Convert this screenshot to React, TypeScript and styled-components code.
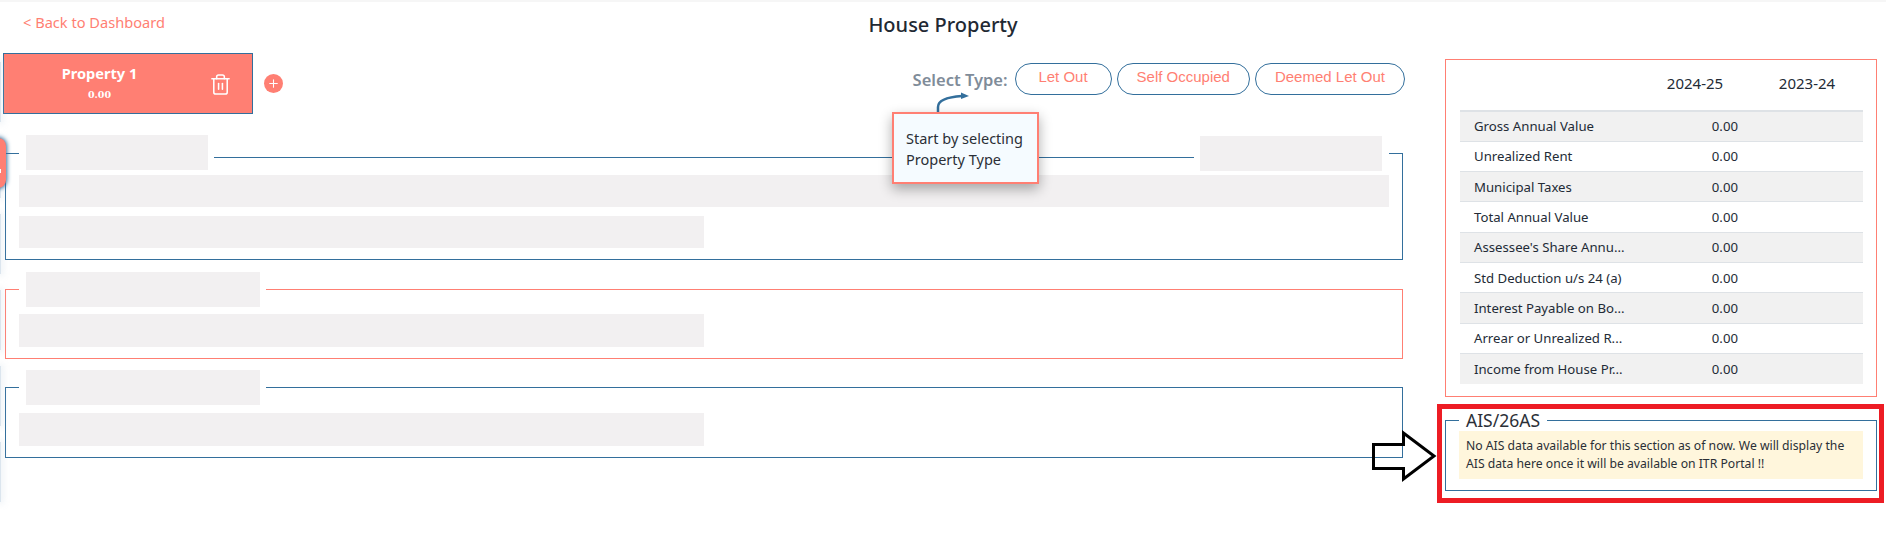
import React from 'react';
import styled, { createGlobalStyle } from 'styled-components';
import { Plus, Trash2 } from 'lucide-react';

const BLUE = '#336f9c';
const CORAL = '#ff7f73';
const SKELETON = '#f2f0f1';

const GlobalStyle = createGlobalStyle`
  html, body {
    margin: 0;
    padding: 0;
    background: #fff;
  }
  body {
    font-family: "Noto Sans", "Open Sans", Arial, sans-serif;
    color: #212b36;
  }
`;

const Page = styled.div`
  position: relative;
  width: 1886px;
  height: 539px;
  overflow: hidden;
  box-sizing: border-box;
  border-top: 2px solid #f6f6f6;
`;

const Header = styled.header`
  display: grid;
  grid-template-columns: 1fr auto 1fr;
  height: 51px;
`;

const BackLink = styled.a`
  padding-left: 23px;
  color: ${CORAL};
  font-size: 14.6px;
  line-height: 40px;
`;

const Title = styled.h1`
  margin: 0;
  font-size: 20px;
  font-weight: 500;
  line-height: 46px;
  color: #1f2933;
`;

const Content = styled.main`
  display: flex;
  align-items: flex-start;
  padding-left: 3px;
`;

const LeftColumn = styled.div`
  width: 1402px;
`;

const RightColumn = styled.aside`
  width: 432px;
  margin-left: 40px;
  margin-top: 6px;
`;

const Toolbar = styled.div`
  position: relative;
  display: flex;
  align-items: flex-start;
  height: 61px;
  margin-bottom: 21px;
`;

const PropertyTab = styled.div`
  display: flex;
  align-items: center;
  box-sizing: border-box;
  width: 250px;
  height: 61px;
  background: ${CORAL};
  border: 1px solid ${BLUE};
  color: #fff;
`;

const TabLabel = styled.div`
  width: 191px;
  margin-top: -2px;
  text-align: center;
`;

const TabName = styled.div`
  font-size: 14.6px;
  font-weight: 700;
  line-height: 20px;
`;

const TabAmount = styled.div`
  font-family: "DejaVu Serif", "Liberation Serif", serif;
  font-size: 9.5px;
  font-weight: 700;
  line-height: 16px;
  margin-top: 4px;
`;

const TrashButton = styled.span`
  display: flex;
  justify-content: center;
  width: 50px;
  margin-top: 2px;
`;

const AddButton = styled.span`
  display: flex;
  align-items: center;
  justify-content: center;
  width: 19px;
  height: 19px;
  margin: 21px 0 0 11px;
  border-radius: 50%;
  background: ${CORAL};
  color: #fff;
`;

const TypePicker = styled.div`
  display: flex;
  align-items: center;
  gap: 5px;
  height: 32px;
  margin: 10px 0 0 auto;
`;

const TypeLabel = styled.span`
  margin-right: 2px;
  font-size: 16.5px;
  font-weight: 600;
  color: #7f8c99;
`;

const TypeButton = styled.button`
  box-sizing: border-box;
  min-width: 97px;
  height: 32px;
  padding: 0 19px 5px;
  background: #fff;
  border: 1px solid ${BLUE};
  border-radius: 16px;
  color: ${CORAL};
  font-family: "Liberation Sans", Arial, sans-serif;
  font-size: 15px;
`;

const HintArrow = styled.svg`
  position: absolute;
  left: 932px;
  top: 37px;
`;

const Hint = styled.div`
  position: absolute;
  z-index: 2;
  left: 889px;
  top: 59px;
  box-sizing: border-box;
  width: 147px;
  height: 72px;
  padding: 14px 12px;
  background: #f5fbff;
  border: 2px solid ${CORAL};
  box-shadow: 0 5px 12px rgba(0, 0, 0, 0.32);
  font-size: 14.5px;
  line-height: 21px;
  color: #2b2f36;
`;

const Section = styled.fieldset<{ $tone: string; $gap: number }>`
  box-sizing: border-box;
  min-width: 0;
  margin: 0 0 ${(p) => p.$gap}px 2px;
  padding: 0 13px 11px;
  width: 1398px;
  border: 1px solid ${(p) => p.$tone};
`;

const SectionLegend = styled.legend`
  box-sizing: border-box;
  padding: 0 6px 0 7px;
  line-height: 0;
`;

const WideLegend = styled(SectionLegend)`
  display: flex;
  width: 100%;
  height: 36px;
  padding-right: 7px;
`;

const LegendLine = styled.span<{ $tone: string }>`
  flex: 1;
  height: 1px;
  margin: 22px 6px 0;
  background: ${(p) => p.$tone};
`;

const Block = styled.div<{ $w: number; $h: number }>`
  width: ${(p) => p.$w}px;
  height: ${(p) => p.$h}px;
  flex: none;
  background: ${SKELETON};
`;

const LastBlock = styled(Block)`
  align-self: flex-end;
`;

const SkeletonStack = styled.div<{ $top: number }>`
  display: flex;
  flex-direction: column;
  gap: 9px;
  margin-top: ${(p) => p.$top}px;
`;

const SummaryPanel = styled.div`
  box-sizing: border-box;
  height: 338px;
  padding: 0 14px;
  border: 1px solid ${CORAL};
`;

const SummaryTable = styled.table`
  width: 403px;
  table-layout: fixed;
  border-collapse: collapse;
  font-size: 13.2px;
  color: #232b36;
`;

const HeadCell = styled.th`
  height: 46px;
  padding: 0 0 4px;
  border-bottom: 2px solid #dee2e6;
  font-size: 15px;
  font-weight: 400;
  text-align: center;
`;

const Row = styled.tr<{ $shaded: boolean }>`
  height: 30.3px;
  background: ${(p) => (p.$shaded ? '#f1f1f1' : '#fff')};
  border-bottom: 1px solid #dee2e6;

  &:last-child {
    border-bottom: none;
  }
`;

const LabelCell = styled.td`
  padding: 0 0 0 14px;
  white-space: nowrap;
  overflow: hidden;
`;

const ValueCell = styled.td`
  padding: 0 13px 0 0;
  text-align: right;
`;

const AisBox = styled.fieldset`
  box-sizing: border-box;
  min-width: 0;
  margin: 12px 0 0;
  padding: 0 13px 11px;
  border: 1px solid ${BLUE};
`;

const AisLegend = styled.legend`
  padding: 0 7px;
  font-size: 17.5px;
  line-height: 22px;
  color: #2b3038;
`;

const AisNotice = styled.div`
  padding: 6px 7px;
  background: #fff6dc;
  font-size: 12.2px;
  line-height: 18px;
  color: #2a2f36;
`;

/* annotations pasted on top of the screenshot */
const RedFrame = styled.div`
  position: absolute;
  left: 1437px;
  top: 402px;
  width: 447px;
  height: 99px;
  box-sizing: border-box;
  border: 5px solid #ed1c24;
`;

const BlackArrow = styled.svg`
  position: absolute;
  left: 1368px;
  top: 426px;
`;

const SideRail = styled.div`
  position: absolute;
  left: 0;
  top: 0;
  bottom: 0;
  display: flex;
  flex-direction: column;
  gap: 16px;
  padding-top: 60px;
`;

const RailGhost = styled.span`
  display: block;
  flex: none;
  width: 1px;
  height: 60px;
  background: #dbe5ee;
  box-shadow: 0 0 6px 2px rgba(175, 195, 215, 0.25);
`;

const RailTab = styled.div`
  position: absolute;
  z-index: 3;
  left: -14px;
  top: 136px;
  width: 20px;
  height: 50px;
  border-radius: 8px;
  background: ${CORAL};
  box-shadow: 0 0 4px 1px ${BLUE};
`;

const RailGlyph = styled.span`
  position: absolute;
  right: 5px;
  top: 31px;
  width: 2px;
  height: 4px;
  background: #fff;
`;

const summaryRows = [
  'Gross Annual Value',
  'Unrealized Rent',
  'Municipal Taxes',
  'Total Annual Value',
  "Assessee's Share Annu...",
  'Std Deduction u/s 24 (a)',
  'Interest Payable on Bo...',
  'Arrear or Unrealized R...',
  'Income from House Pr...',
];

const App = () => {
  return (
    <Page>
      <GlobalStyle />
      <Header>
        <BackLink>&lt; Back to Dashboard</BackLink>
        <Title>House Property</Title>
      </Header>
      <Content>
        <LeftColumn>
          <Toolbar>
            <PropertyTab>
              <TabLabel>
                <TabName>Property 1</TabName>
                <TabAmount>0.00</TabAmount>
              </TabLabel>
              <TrashButton>
                <Trash2 size={23} strokeWidth={1.6} />
              </TrashButton>
            </PropertyTab>
            <AddButton>
              <Plus size={13} strokeWidth={2} />
            </AddButton>
            <TypePicker>
              <TypeLabel>Select Type:</TypeLabel>
              <TypeButton>Let Out</TypeButton>
              <TypeButton>Self Occupied</TypeButton>
              <TypeButton>Deemed Let Out</TypeButton>
            </TypePicker>
            <HintArrow width="40" height="24" viewBox="0 0 40 24">
              <path d="M3 23 V17 C3 10 12 7 27 6" fill="none" stroke={BLUE} strokeWidth="2.5" />
              <path d="M26 2.5 L34 6 L26 9 Z" fill={BLUE} />
            </HintArrow>
            <Hint>
              Start by selecting
              <br />
              Property Type
            </Hint>
          </Toolbar>

          <Section $tone={BLUE} $gap={12}>
            <WideLegend>
              <Block $w={182} $h={35} />
              <LegendLine $tone={BLUE} />
              <LastBlock $w={182} $h={35} />
            </WideLegend>
            <SkeletonStack $top={4}>
              <Block $w={1370} $h={32} />
              <Block $w={685} $h={32} />
            </SkeletonStack>
          </Section>

          <Section $tone={CORAL} $gap={11}>
            <SectionLegend>
              <Block $w={234} $h={35} />
            </SectionLegend>
            <SkeletonStack $top={7}>
              <Block $w={685} $h={33} />
            </SkeletonStack>
          </Section>

          <Section $tone={BLUE} $gap={0}>
            <SectionLegend>
              <Block $w={234} $h={35} />
            </SectionLegend>
            <SkeletonStack $top={8}>
              <Block $w={685} $h={33} />
            </SkeletonStack>
          </Section>
        </LeftColumn>

        <RightColumn>
          <SummaryPanel>
            <SummaryTable>
              <colgroup>
                <col width="179" />
                <col width="112" />
                <col width="112" />
              </colgroup>
              <thead>
                <tr>
                  <HeadCell />
                  <HeadCell>2024-25</HeadCell>
                  <HeadCell>2023-24</HeadCell>
                </tr>
              </thead>
              <tbody>
                {summaryRows.map((label, i) => (
                  <Row key={label} $shaded={i % 2 === 0}>
                    <LabelCell>{label}</LabelCell>
                    <ValueCell>0.00</ValueCell>
                    <td />
                  </Row>
                ))}
              </tbody>
            </SummaryTable>
          </SummaryPanel>
          <AisBox>
            <AisLegend>AIS/26AS</AisLegend>
            <AisNotice>
              No AIS data available for this section as of now. We will display the AIS data here once it will be
              available on ITR Portal !!
            </AisNotice>
          </AisBox>
        </RightColumn>
      </Content>

      <SideRail>
        {[0, 1, 2, 3, 4, 5].map((n) => (
          <RailGhost key={n} />
        ))}
      </SideRail>
      <RailTab>
        <RailGlyph />
      </RailTab>

      <RedFrame />
      <BlackArrow width="70" height="58" viewBox="0 0 70 58">
        <path d="M5.5 16.5 H35.5 V5 L66 28 L35.5 51 V40.5 H5.5 Z" fill="none" stroke="#000" strokeWidth="3" />
      </BlackArrow>
    </Page>
  );
};

export default App;
